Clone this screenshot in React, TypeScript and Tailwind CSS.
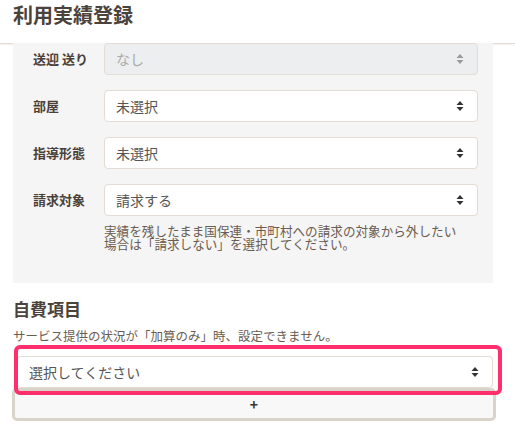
import React from 'react';

const font = { fontFamily: '"Noto Sans CJK JP", "Noto Sans", sans-serif' };

const Arrows = ({ muted }: { muted?: boolean }) => (
  <svg width="8" height="12" viewBox="0 0 8 12" className={muted ? 'text-[#9a9a9a]' : 'text-[#333]'}>
    <path d="M4 1 L7.5 5 H0.5 Z" fill="currentColor" />
    <path d="M4 11 L7.5 7 H0.5 Z" fill="currentColor" />
  </svg>
);

const Select = ({ value, disabled }: { value: string; disabled?: boolean }) => (
  <div
    className={`flex h-[32px] items-center justify-between rounded-[4px] border border-[#e2dcd4] pl-[11px] pr-[13px] text-[14px] ${
      disabled ? 'bg-[#eceeef] text-[#aaa]' : 'bg-white text-[#555]'
    }`}
  >
    <span>{value}</span>
    <Arrows muted={disabled} />
  </div>
);

const Row = ({ label, value, disabled }: { label: string; value: string; disabled?: boolean }) => (
  <div className="flex items-center">
    <div className="w-[71px] shrink-0 text-[13px] font-bold text-[#4b4037]">{label}</div>
    <div className="flex-1">
      <Select value={value} disabled={disabled} />
    </div>
  </div>
);

export default function App() {
  return (
    <div className="h-[429px] w-[515px] overflow-hidden bg-white" style={font}>
      {/* header */}
      <div className="h-[44px] border-b border-[#e3dbd2] pl-[13px] pt-[1px] shadow-[0_1px_2px_rgba(0,0,0,0.06)]">
        <h1 className="text-[20px] font-bold leading-[28px] text-[#4b433b]">利用実績登録</h1>
      </div>

      {/* form panel */}
      <div className="ml-[13px] w-[480px] bg-[#f5f5f5] pb-[33px] pl-[20px] pr-[15px]">
        <div className="-mt-px flex flex-col gap-[15px]">
          <Row label="送迎 送り" value="なし" disabled />
          <Row label="部屋" value="未選択" />
          <Row label="指導形態" value="未選択" />
          <div>
            <Row label="請求対象" value="請求する" />
            <p className="ml-[71px] mt-[8px] text-[12.6px] leading-[13px] text-[#6a5c51]">
              実績を残したまま国保連・市町村への請求の対象から外したい
              <br />
              場合は「請求しない」を選択してください。
            </p>
          </div>
        </div>
      </div>

      {/* self-pay */}
      <div className="pl-[13px] pt-[15px]">
        <h2 className="text-[17px] font-bold leading-[22px] text-[#4b433b]">自費項目</h2>
        <p className="mt-[8px] text-[12.5px] leading-[16px] text-[#6a5c51]">
          サービス提供の状況が「加算のみ」時、設定できません。
        </p>
      </div>

      <div className="relative mt-px w-[496px]">
        <div className="ml-[17px] mr-[3px] pt-[11px]">
          <Select value="選択してください" />
        </div>
        <div className="ml-[12px] flex h-[33px] items-center justify-center rounded-[5px] border-[3px] border-[#d9d3ca] bg-[#f8f8f8] text-[14px] font-bold text-[#333]">
          +
        </div>
        <div className="pointer-events-none absolute left-[14px] top-0 h-[50px] w-[488px] rounded-[6px] border-[4px] border-[#ff2e6c]" />
      </div>
    </div>
  );
}
